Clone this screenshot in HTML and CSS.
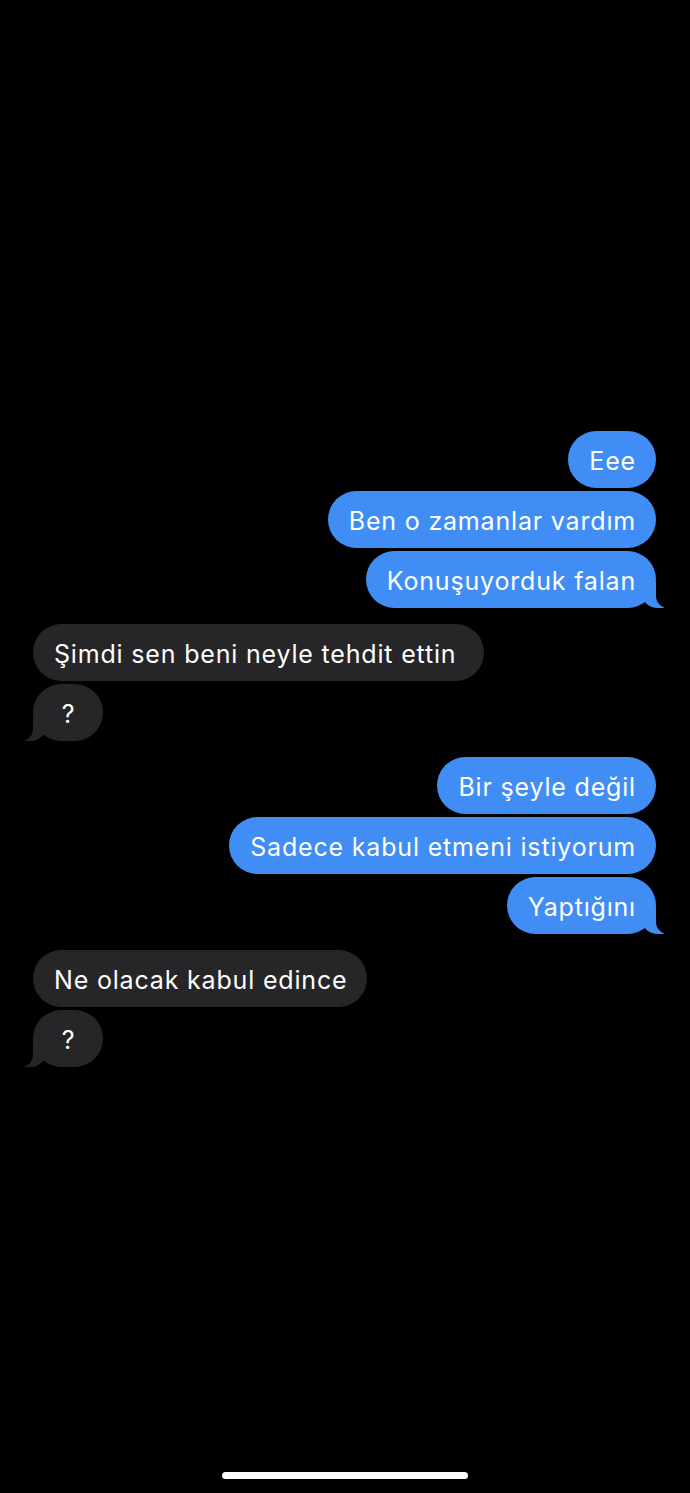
FILE: index.html
```html
<!DOCTYPE html>
<html lang="tr">
<head>
<meta charset="UTF-8">
<meta name="viewport" content="width=device-width, initial-scale=1.0">
<title>Mesajlar</title>
<link rel="stylesheet" href="styles.css">
</head>
<body>

<div class="chat">
  <div class="group sent">
    <div class="bubble">Eee</div>
    <div class="bubble">Ben o zamanlar vardım</div>
    <div class="bubble tail">Konuşuyorduk falan</div>
  </div>

  <div class="group received">
    <div class="bubble">Şimdi sen beni neyle tehdit ettin&nbsp;</div>
    <div class="bubble tail">?</div>
  </div>

  <div class="group sent">
    <div class="bubble">Bir şeyle değil</div>
    <div class="bubble">Sadece kabul etmeni istiyorum</div>
    <div class="bubble tail">Yaptığını</div>
  </div>

  <div class="group received">
    <div class="bubble">Ne olacak kabul edince</div>
    <div class="bubble tail">?</div>
  </div>
</div>

<div class="home-indicator"></div>

</body>
</html>
```

FILE: styles.css
```css
body {
  margin: 0;
  background-color: #000;
  font-family: Inter, "Liberation Sans", sans-serif;
  height: 1493px;
  display: flex;
  flex-direction: column;
  overflow: hidden;
}

.chat {
  padding: 431px 34px 0 33px;
  display: flex;
  flex-direction: column;
  gap: 16px;
  flex: 1;
}

.group {
  display: flex;
  flex-direction: column;
  gap: 3px;
}

.sent {
  align-items: flex-end;
}

.received {
  align-items: flex-start;
}

.bubble {
  position: relative;
  height: 57px;
  min-width: 70px;
  box-sizing: border-box;
  padding: 3px 20px 0 21px;
  border-radius: 29px;
  font-size: 25px;
  letter-spacing: 0.82px;
  line-height: 54px;
  text-align: center;
  color: #fff;
  white-space: nowrap;
}

.sent .bubble {
  background-color: #408df5;
}

.received .bubble {
  background-color: #262628;
}

/* cola de la burbuja */
.tail::before,
.tail::after {
  content: "";
  position: absolute;
  bottom: 0;
  height: 26px;
}

.sent .tail::before {
  right: -8px;
  width: 22px;
  background-color: #408df5;
  border-bottom-left-radius: 16px 14px;
}

.sent .tail::after {
  right: -26px;
  width: 26px;
  background-color: #000;
  border-bottom-left-radius: 12px;
}

.received .tail::before {
  left: -9px;
  width: 22px;
  background-color: #262628;
  border-bottom-right-radius: 16px 14px;
}

.received .tail::after {
  left: -26px;
  width: 26px;
  background-color: #000;
  border-bottom-right-radius: 12px;
}

.home-indicator {
  width: 246px;
  height: 7px;
  border-radius: 4px;
  background-color: #fff;
  margin: 0 auto 14px 222px;
}
```
